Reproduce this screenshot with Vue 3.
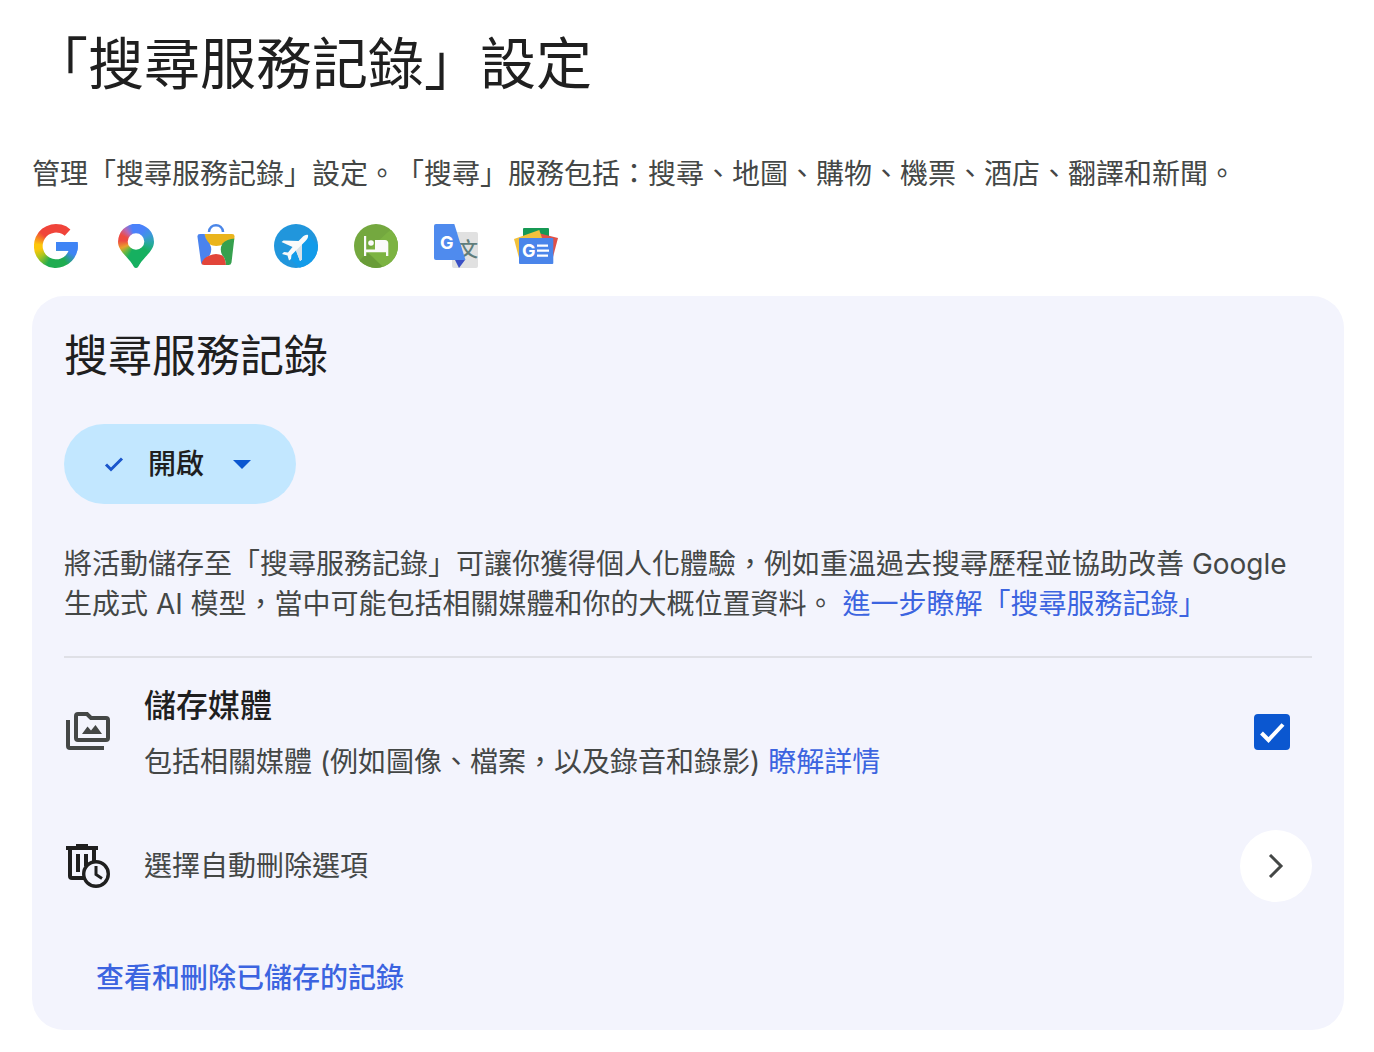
<template>
  <main class="page">
    <h1>「搜尋服務記錄」設定</h1>
    <p class="intro">{{ intro }}</p>

    <div class="services">
      <span class="logo logo-google" role="img" aria-label="Google"></span>
      <span class="logo logo-maps" role="img" aria-label="Maps"></span>

      <svg class="logo" viewBox="0 0 44 44" aria-hidden="true">
        <clipPath id="bag">
          <path d="M6 10H38Q41 10 40.500 13L37.500 38.500Q37 41 34.500 41H10Q7.500 41 7 38.500L3.500 13Q3 10 6 10Z" />
        </clipPath>
        <path d="M15 8C15.500 -1 28.500 -1 29 8" fill="none" stroke="#4a86e8" stroke-width="2.5" />
        <g clip-path="url(#bag)">
          <rect width="44" height="44" fill="#fff" />
          <path d="M10 9H42V15L30 20Q22 24 15 20Q11 16 10 9Z" fill="#eab41c" />
          <path d="M2 9H10.500Q11 15 15.500 19.500Q19 25.500 15.500 31.500Q9 35 7.500 42H2Z" fill="#4a83ee" />
          <path d="M7 42Q8 34 15.500 31.500Q22 28.500 28.500 31.500Q32 35 32 42Z" fill="#e2453a" />
          <path d="M42 14.500Q33 15 28.500 19.500Q25 25.500 28.500 31.500Q32 35 32 42H42Z" fill="#36a04e" />
        </g>
      </svg>

      <svg class="logo" viewBox="0 0 44 44" aria-hidden="true">
        <clipPath id="disc"><circle cx="22" cy="22" r="22" /></clipPath>
        <g clip-path="url(#disc)">
          <rect width="44" height="44" fill="#2196dc" />
          <path d="M34 11L46 23V46H28L14 33L22 26Z" fill="#139be9" />
          <path d="M34 11C32 10.500 30 11.500 28 13.500L24.500 17L9.500 16.500L7.500 18L18.500 23L14 28.500L10 28L8 30L13.500 31.500L15 36.500L17 35L17.500 31L22 26.500L26 37L28 35.500L28 20.500L31.500 17C33.500 15 34.500 13 34 11Z" fill="#fafafa" />
          <path d="M22 26.500L26 37L28 35.500L28 20.500Z" fill="#d9e2e8" />
        </g>
      </svg>

      <svg class="logo" viewBox="0 0 44 44" aria-hidden="true">
        <g clip-path="url(#disc)">
          <rect width="44" height="44" fill="#74a83f" />
          <path d="M12 28L34 8L46 0V46H32L18 32Z" fill="#7cb342" />
          <path d="M10 32L14 29L30 44H18L4 38Z" fill="#699c38" />
        </g>
        <path d="M10 12H12.200V25.500H21V16H31Q34.300 16 34.300 19.500V32H32V28.300H12.200V32H10Z" fill="#fafafa" />
        <circle cx="17" cy="19" r="2.800" fill="#fafafa" />
      </svg>

      <svg class="logo" viewBox="0 0 44 44" aria-hidden="true">
        <rect x="18" y="8" width="26" height="36" rx="2" fill="#e1e1e1" />
        <text x="24" y="33" class="logo-han">文</text>
        <path d="M21 36H31L25 44Z" fill="#3a50c5" />
        <path d="M2 0H20.300L31.500 36H2Q0 36 0 34V2Q0 0 2 0Z" fill="#4f8bee" />
        <text x="6" y="25" class="logo-letter">G</text>
      </svg>

      <svg class="logo" viewBox="0 0 44 44" aria-hidden="true">
        <rect x="9" y="4" width="26" height="20" rx="1" fill="#169954" />
        <path d="M26 9.500L44 14L39 33H24Z" fill="#df5048" />
        <path d="M0 15L25.300 6L30 20L5 34Z" fill="#f2c13c" />
        <rect x="5" y="14" width="34.300" height="26" rx="1" fill="#4a85ea" />
        <text x="8" y="33" class="logo-letter">G</text>
        <path d="M23 21.700H34M23 26.700H35M23 31.700H34" stroke="#fff" stroke-width="2.2" />
      </svg>
    </div>

    <section class="card">
      <h2>搜尋服務記錄</h2>

      <button type="button" class="toggle" aria-haspopup="menu">
        <svg width="20" height="20" viewBox="0 0 20 20" aria-hidden="true">
          <path d="M2 10.500L7 15.500L18 4.500" fill="none" stroke="#1a56cc" stroke-width="3" />
        </svg>
        <span>開啟</span>
        <svg width="20" height="20" viewBox="0 0 20 20" aria-hidden="true">
          <path d="M1 6H19L10 15Z" fill="#0b57d0" />
        </svg>
      </button>

      <p class="description">
        {{ description }}
        <a href="#">進一步瞭解「搜尋服務記錄」</a>
      </p>

      <hr />

      <div class="row media">
        <svg class="row-icon" viewBox="0 0 44 44" aria-hidden="true">
          <g fill="none" stroke="#444746" stroke-width="4">
            <path d="M2 10V36Q2 38 4 38H38" />
            <path d="M12 4H21L25 8H40Q42 8 42 10V28Q42 30 40 30H12Q10 30 10 28V6Q10 4 12 4Z" />
          </g>
          <path d="M16 24L21.500 16.500L25 20.500L29.500 15L36 24Z" fill="#444746" />
        </svg>
        <div class="row-text">
          <label for="save-media">儲存媒體</label>
          <p>包括相關媒體 (例如圖像、檔案，以及錄音和錄影) <a href="#">瞭解詳情</a></p>
        </div>
        <span class="check">
          <input id="save-media" v-model="saveMedia" type="checkbox" />
          <svg v-if="saveMedia" viewBox="0 0 36 36" aria-hidden="true">
            <path d="M7.500 19L14.500 26L29 10.500" fill="none" stroke="#fff" stroke-width="4" />
          </svg>
        </span>
      </div>

      <div class="row auto-delete">
        <svg class="row-icon" viewBox="0 0 44 44" aria-hidden="true">
          <g fill="none" stroke="#1f1f1f" stroke-width="4">
            <path d="M0 4H32" />
            <path d="M10 1.500H22" stroke-width="3" />
            <path d="M4 4V32Q4 34 6 34H18M28 4V18" />
            <path d="M12 10V28M20 10V22" />
          </g>
          <circle cx="30" cy="30" r="12.300" fill="#f3f4fd" stroke="#1f1f1f" stroke-width="3.400" />
          <path d="M30 22V30.500L36 34.500" fill="none" stroke="#1f1f1f" stroke-width="3" />
        </svg>
        <p class="row-text">選擇自動刪除選項</p>
        <button type="button" class="next" aria-label="選擇自動刪除選項">
          <svg width="24" height="24" viewBox="0 0 24 24" aria-hidden="true">
            <path d="M6 1L17 12L6 23" fill="none" stroke="#444746" stroke-width="3" />
          </svg>
        </button>
      </div>

      <a class="view-all" href="#">查看和刪除已儲存的記錄</a>
    </section>
  </main>
</template>

<script setup>
import { ref } from "vue";

const saveMedia = ref(true);

const intro =
  "管理「搜尋服務記錄」設定。「搜尋」服務包括：搜尋、地圖、購物、機票、酒店、翻譯和新聞。";

const description =
  "將活動儲存至「搜尋服務記錄」可讓你獲得個人化體驗，例如重溫過去搜尋歷程並協助改善 Google 生成式 AI 模型，當中可能包括相關媒體和你的大概位置資料。";
</script>

<style>
body {
  background: #fff;
}
</style>

<style scoped>
.page {
  padding: 28px 30px 20px 32px;
  font-family: Inter, "Noto Sans CJK TC", sans-serif;
  font-size: 28px;
  line-height: 40px;
  color: #444746;
  text-spacing-trim: space-all;
}

h1,
h2,
p {
  margin: 0;
  font-weight: 400;
}

h1 {
  font-size: 56px;
  line-height: 72px;
  color: #1f1f1f;
}

h2 {
  font-size: 44px;
  line-height: 56px;
  color: #1f1f1f;
}

a {
  color: #3c64e0;
  text-decoration: none;
}

button {
  border: 0;
  font: inherit;
  cursor: pointer;
}

.intro {
  margin-top: 54px;
}

.services {
  display: flex;
  gap: 36px;
  margin-top: 30px;
  padding-left: 2px;
}

.logo {
  display: block;
  width: 44px;
  height: 44px;
}

.logo-google {
  background:
    linear-gradient(#3f84f5, #3f84f5) 22px 18px / 22px 9px no-repeat,
    conic-gradient(
      #f0443a 0deg 60deg,
      #3f84f5 62deg 115deg,
      #1fac50 150deg 205deg,
      #a8c51f 235deg,
      #fdc70a 260deg 275deg,
      #f0443a 312deg 360deg
    );
  clip-path: path("M36.4 5.4A22 22 0 1 0 43.5 18L22 18V26.7H34.6A13.4 13.4 0 1 1 30.7 11.7Z");
}

.logo-maps {
  background: conic-gradient(
    at 22px 18px,
    #4a82fa 0deg 30deg,
    #3f96e0 60deg,
    #27a9a0 95deg,
    #16b060 130deg 205deg,
    #6fb83f 228deg,
    #eaa02c 248deg,
    #ee4b42 275deg 295deg,
    #b968b5 320deg,
    #4a82fa 345deg
  );
  clip-path: path(evenodd, "M22 44C20 44 19.5 42 18.5 40.500C14 33 4 27 4 17.800A18 18 0 0 1 40 17.800C40 27 30 33 25.500 40.500C24.500 42 24 44 22 44ZM13.700 17.500A8.300 8.300 0 1 0 30.300 17.500A8.300 8.300 0 1 0 13.700 17.500Z");
}

.logo-letter {
  font-size: 18px;
  font-weight: 700;
  fill: #fff;
}

.logo-han {
  font-size: 20px;
  font-weight: 500;
  fill: #607d7b;
}

.card {
  display: flex;
  flex-direction: column;
  margin-top: 28px;
  padding: 32px;
  border-radius: 32px;
  background: #f3f4fd;
}

.toggle {
  display: flex;
  align-items: center;
  align-self: flex-start;
  gap: 24px;
  height: 80px;
  margin-top: 40px;
  padding: 0 44px 0 40px;
  border-radius: 40px;
  background: #c2e7ff;
  color: #1f1f1f;
  font-weight: 500;
}

.toggle span {
  margin-right: 4px;
}

.description {
  margin-top: 40px;
}

hr {
  width: 100%;
  height: 2px;
  margin: 32px 0 0;
  border: 0;
  background: #dfe0e6;
}

.row {
  display: flex;
  align-items: center;
  gap: 34px;
}

.row-icon {
  flex: none;
  width: 44px;
  height: 44px;
  margin-left: 2px;
}

.row-text {
  flex: 1;
}

.media {
  margin-top: 24px;
}

.media label {
  display: block;
  margin-bottom: 12px;
  font-size: 32px;
  font-weight: 500;
  line-height: 48px;
  color: #1f1f1f;
}

.check {
  position: relative;
  width: 36px;
  height: 36px;
  margin-right: 22px;
}

.check input {
  display: block;
  width: 36px;
  height: 36px;
  margin: 0;
  border: 4px solid #444746;
  border-radius: 4px;
  appearance: none;
}

.check input:checked {
  border-color: #0b57d0;
  background: #0b57d0;
}

.check svg {
  position: absolute;
  inset: 0;
  pointer-events: none;
}

.auto-delete {
  margin-top: 48px;
}

.next {
  display: flex;
  align-items: center;
  justify-content: center;
  width: 72px;
  height: 72px;
  padding: 0;
  border-radius: 50%;
  background: #fff;
}

.view-all {
  align-self: flex-start;
  margin: 56px 0 0 32px;
  font-weight: 500;
}
</style>
